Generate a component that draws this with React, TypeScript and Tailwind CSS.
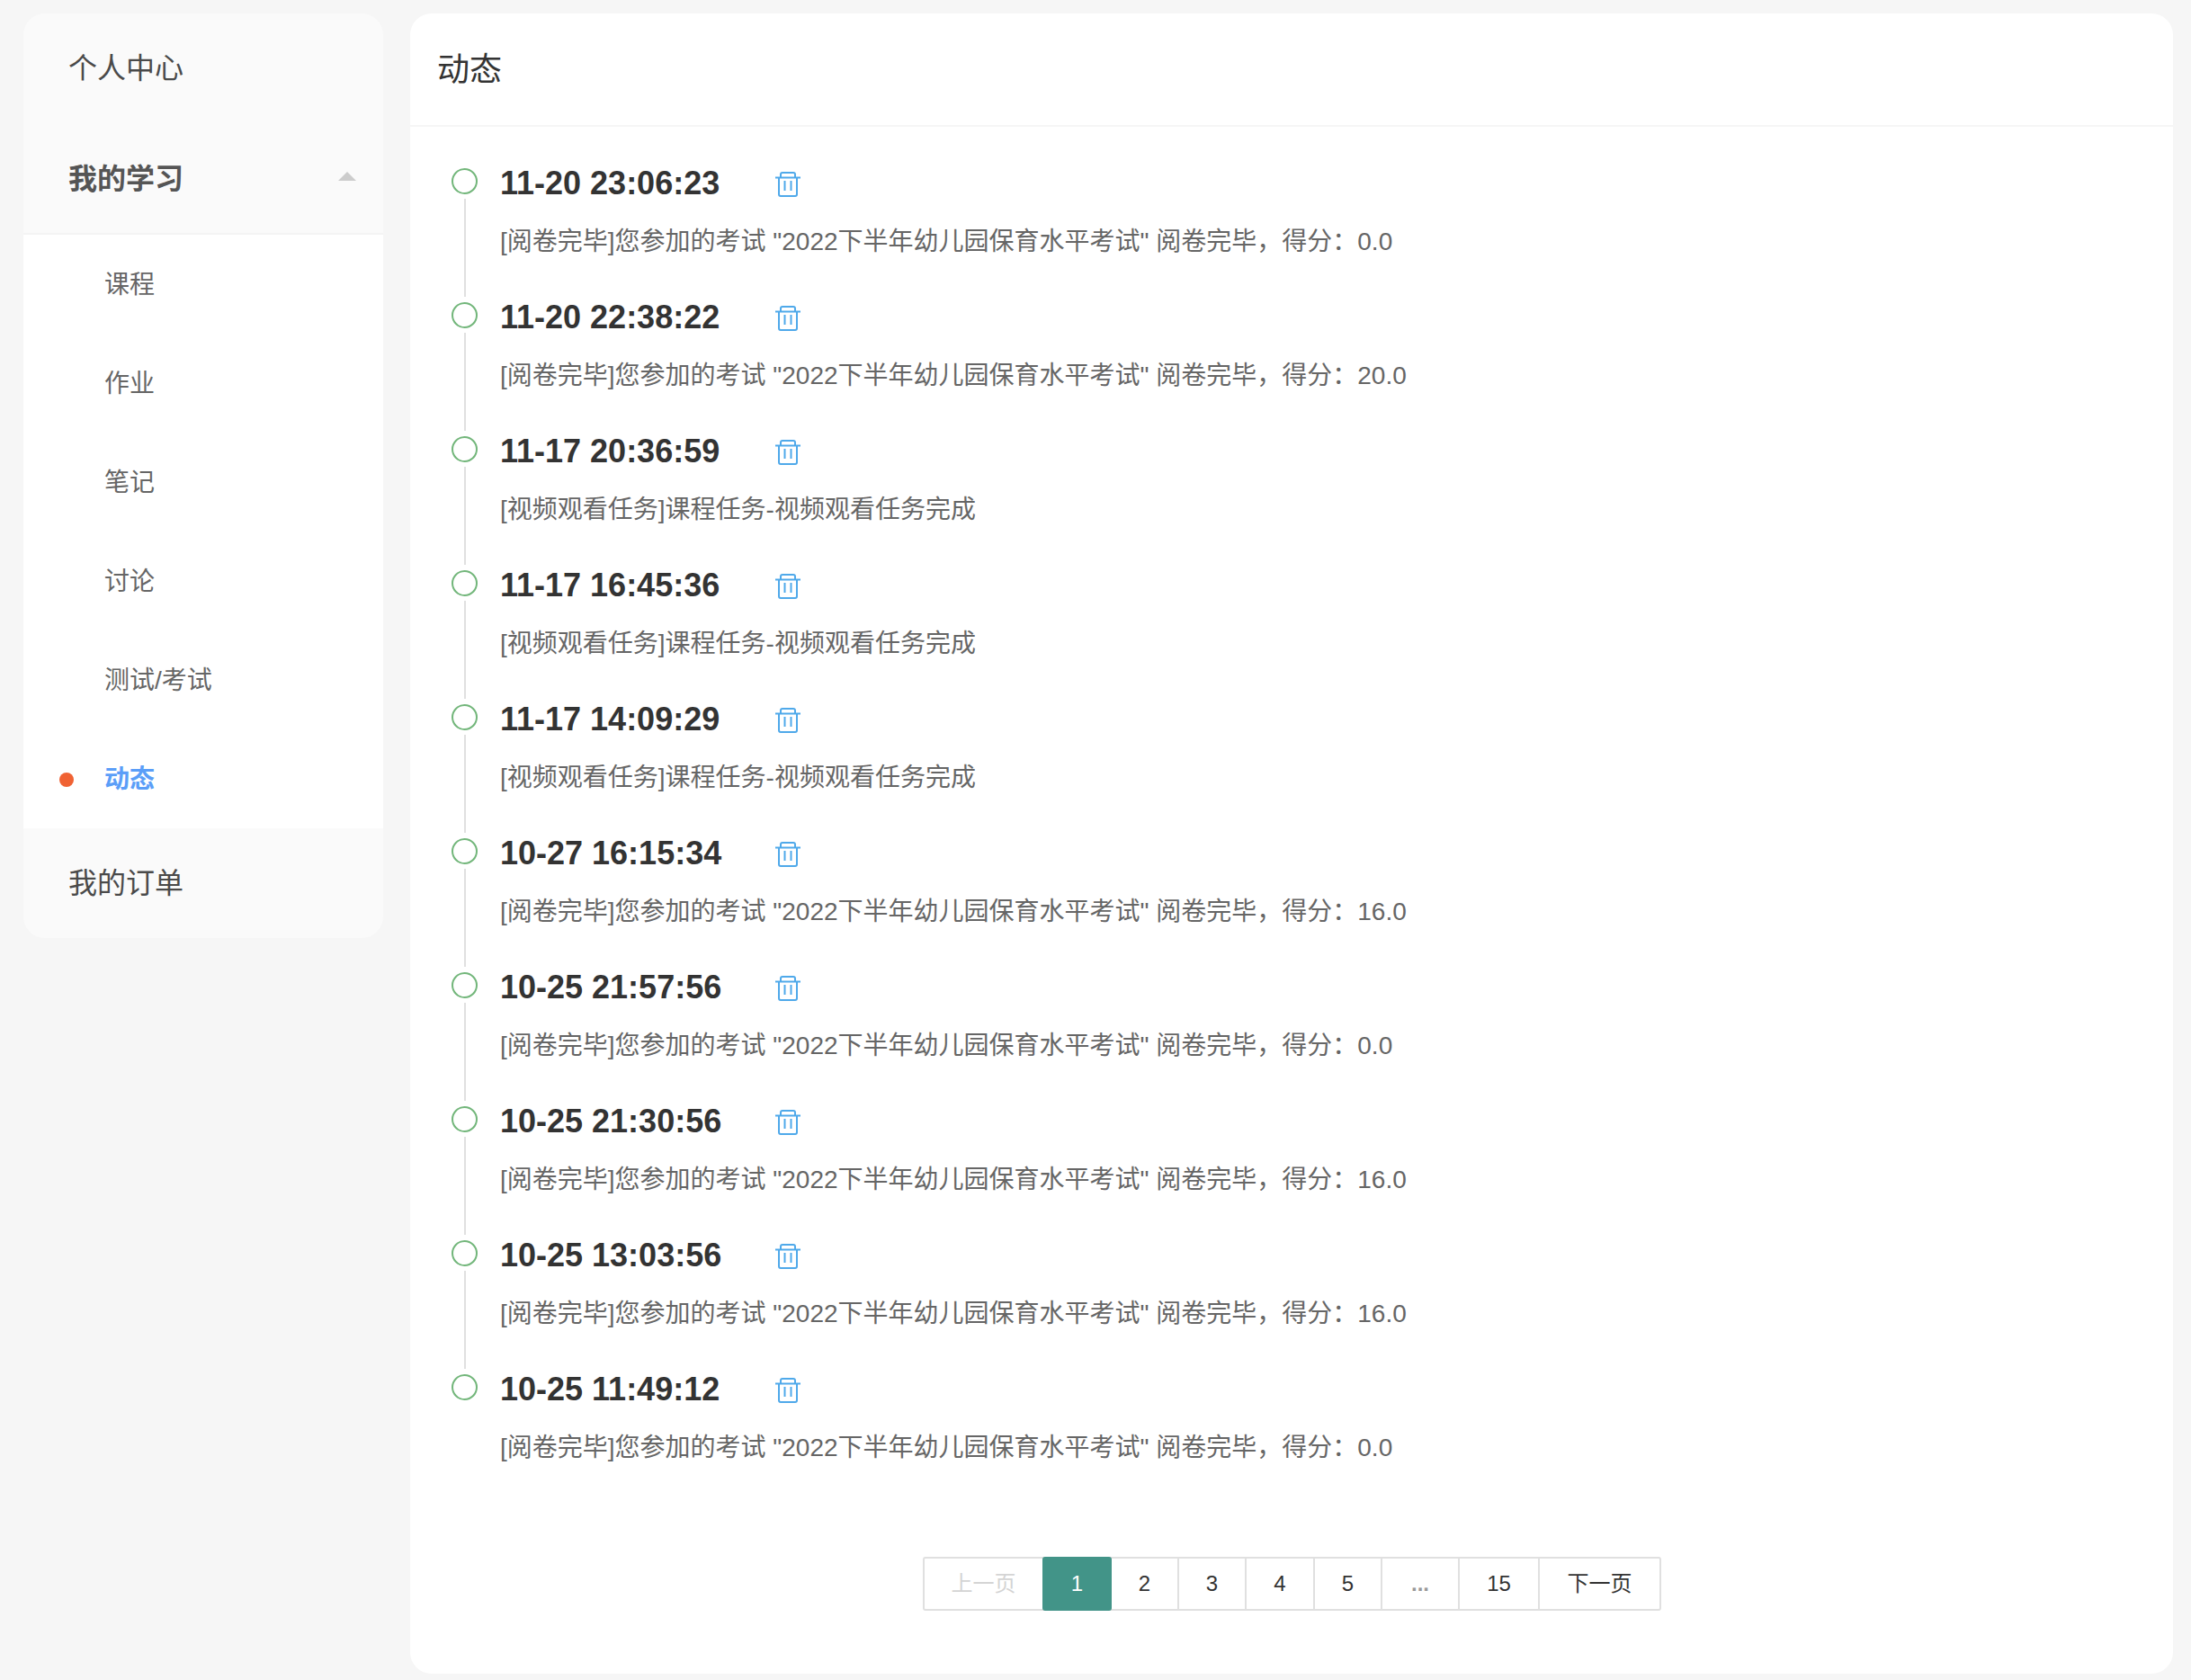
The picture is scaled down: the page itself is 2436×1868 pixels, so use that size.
import React from 'react';

const fontStack = 'font-["Liberation_Sans","Noto_Sans_CJK_SC",sans-serif]';

const subMenu = ['课程', '作业', '笔记', '讨论', '测试/考试', '动态'];

const examText = (score: string) =>
  `[阅卷完毕]您参加的考试 "2022下半年幼儿园保育水平考试" 阅卷完毕，得分：${score}`;
const videoText = '[视频观看任务]课程任务-视频观看任务完成';

const activities = [
  { time: '11-20 23:06:23', text: examText('0.0') },
  { time: '11-20 22:38:22', text: examText('20.0') },
  { time: '11-17 20:36:59', text: videoText },
  { time: '11-17 16:45:36', text: videoText },
  { time: '11-17 14:09:29', text: videoText },
  { time: '10-27 16:15:34', text: examText('16.0') },
  { time: '10-25 21:57:56', text: examText('0.0') },
  { time: '10-25 21:30:56', text: examText('16.0') },
  { time: '10-25 13:03:56', text: examText('16.0') },
  { time: '10-25 11:49:12', text: examText('0.0') },
];

function TrashIcon() {
  return (
    <svg viewBox="0 0 28 28" fill="none" stroke="#4fa9ea" strokeWidth="2" className="w-[28px] h-[28px] flex-none">
      <line x1="0" y1="6.5" x2="28" y2="6.5" />
      <path d="M6 6.5V3a2 2 0 0 1 2-2h12a2 2 0 0 1 2 2v3.5" />
      <path d="M4 6.5V25a2 2 0 0 0 2 2h16a2 2 0 0 0 2-2V6.5" />
      <line x1="10.5" y1="10" x2="10.5" y2="21" />
      <line x1="17.5" y1="10" x2="17.5" y2="21" />
    </svg>
  );
}

function Sidebar() {
  return (
    <aside className="w-[400px] flex-none self-start rounded-[24px] overflow-hidden bg-[#fafafa]">
      <div className="h-[122px] pl-[50px] flex items-center text-[32px] text-[#4a4a4a]">个人中心</div>
      <div className="h-[124px] pl-[50px] pr-[30px] pt-[1px] flex items-center justify-between border-b-2 border-[#f4f4f4]">
        <span className="text-[32px] font-bold text-[#555555]">我的学习</span>
        <span className="w-0 h-0 -mt-[6px] border-x-[10px] border-x-transparent border-b-[10px] border-b-[#cccccc]" />
      </div>
      <div className="bg-white">
        {subMenu.map((name) => {
          const active = name === '动态';
          return (
            <div
              key={name}
              className={`relative h-[110px] pl-[90px] pt-[1px] flex items-center text-[28px] ${
                active ? 'font-bold text-[#5b9ef8]' : 'text-[#666666]'
              }`}
            >
              {active && <span className="absolute left-[40px] top-[48px] w-[16px] h-[16px] rounded-full bg-[#f06233]" />}
              {name}
            </div>
          );
        })}
      </div>
      <div className="h-[122px] pl-[50px] flex items-center text-[32px] text-[#4a4a4a]">我的订单</div>
    </aside>
  );
}

function Pagination() {
  return (
    <div className="flex justify-center">
      <div className="flex h-[60px] ml-[1px] text-[24px] text-[#333333] border-2 border-[#e0e0e0] rounded-[3px] box-border">
        <div className="w-[131px] flex items-center justify-center text-[#d4d4d4]">上一页</div>
        <div className="w-[77px] -my-[2px] flex items-center justify-center bg-[#429488] text-white rounded-[3px]">1</div>
        <div className="w-[75px] flex items-center justify-center border-r-2 border-[#e0e0e0]">2</div>
        <div className="w-[75px] flex items-center justify-center border-r-2 border-[#e0e0e0]">3</div>
        <div className="w-[76px] flex items-center justify-center border-r-2 border-[#e0e0e0]">4</div>
        <div className="w-[75px] flex items-center justify-center border-r-2 border-[#e0e0e0]">5</div>
        <div className="w-[86px] flex items-center justify-center border-r-2 border-[#e0e0e0] text-[#999999] font-bold">...</div>
        <div className="w-[89px] flex items-center justify-center border-r-2 border-[#e0e0e0]">15</div>
        <div className="w-[133px] flex items-center justify-center">下一页</div>
      </div>
    </div>
  );
}

export default function App() {
  return (
    <div className={`${fontStack} min-h-[1868px] bg-[#f6f6f6] flex gap-[30px] pl-[26px] pr-[20px] pt-[15px] pb-[7px]`}>
      <Sidebar />
      <main className="flex-1 rounded-[24px] bg-white flex flex-col">
        <div className="h-[126px] pl-[30px] pt-[2px] flex items-center border-b-2 border-[#f6f6f6] text-[36px] text-[#333333]">动态</div>
        <div className="pt-[46px] pl-[46px] flex flex-col">
          {activities.map((item, i) => (
            <div key={item.time + i} className="h-[149px] flex">
              <div className="w-[29px] flex-none flex flex-col items-center">
                <span className="w-[29px] h-[29px] flex-none rounded-full border-2 border-[#72b67a]" />
                {i < activities.length - 1 && <span className="w-[2px] h-[109px] mt-[5px] bg-[#e0e0e0]" />}
              </div>
              <div className="ml-[25px]">
                <div className="h-[32px] flex items-center">
                  <span className="w-[306px] text-[36px] font-bold text-[#333333] leading-[32px] mt-[2px]">{item.time}</span>
                  <span className="mt-[3px]"><TrashIcon /></span>
                </div>
                <div className="mt-[32px] text-[28px] leading-[36px] text-[#666666]">{item.text}</div>
              </div>
            </div>
          ))}
        </div>
        <div className="mt-[54px]">
          <Pagination />
        </div>
      </main>
    </div>
  );
}
